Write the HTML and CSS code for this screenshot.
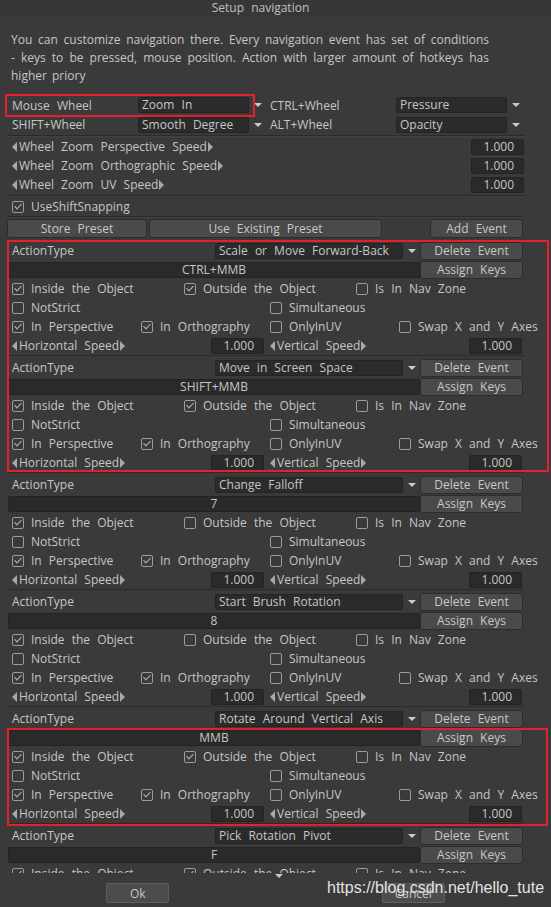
FILE: index.html
```html
<!DOCTYPE html>
<html>
<head>
<meta charset="utf-8">
<title>Setup navigation</title>
<link rel="stylesheet" href="styles.css">
</head>
<body>
<div class="titlebar">Setup navigation</div>
<div class="viewport">
  <p class="intro">You can customize navigation there. Every navigation event has set of conditions - keys to be pressed, mouse position. Action with larger amount of hotkeys has higher priory</p>

  <div class="wheel">
    <div class="wcell"><span class="wlbl">Mouse Wheel</span><span class="combo">Zoom In</span><span class="drop"><i class="tri-down"></i></span></div>
    <div class="wcell"><span class="wlbl">CTRL+Wheel</span><span class="combo">Pressure</span><span class="drop"><i class="tri-down"></i></span></div>
    <div class="wcell"><span class="wlbl">SHIFT+Wheel</span><span class="combo">Smooth Degree</span><span class="drop"><i class="tri-down"></i></span></div>
    <div class="wcell"><span class="wlbl">ALT+Wheel</span><span class="combo">Opacity</span><span class="drop"><i class="tri-down"></i></span></div>
  </div>
  <div class="sep sep-a"></div>
  <div class="speeds">
    <div class="srow"><span class="arrlbl"><i class="tri-l"></i>Wheel Zoom Perspective Speed<i class="tri-r"></i></span><span class="num">1.000</span></div>
    <div class="srow"><span class="arrlbl"><i class="tri-l"></i>Wheel Zoom Orthographic Speed<i class="tri-r"></i></span><span class="num">1.000</span></div>
    <div class="srow"><span class="arrlbl"><i class="tri-l"></i>Wheel Zoom UV Speed<i class="tri-r"></i></span><span class="num">1.000</span></div>
  </div>
  <div class="sep sep-b"></div>
  <div class="row snap"><span class="chk"><span class="cb on"></span>UseShiftSnapping</span></div>
  <div class="sep"></div>
  <div class="toolbar">
    <div class="btn b-store">Store Preset</div>
    <div class="btn b-use">Use Existing Preset</div>
    <div class="btn b-add">Add Event</div>
  </div>

  <div class="events">
    <section class="event">
      <div class="row"><span class="alabel">ActionType</span><span class="combo wide">Scale or Move Forward-Back</span><span class="drop"><i class="tri-down"></i></span><div class="btn ebtn">Delete Event</div></div>
      <div class="row"><span class="keys">CTRL+MMB</span><div class="btn ebtn">Assign Keys</div></div>
      <div class="row g3"><span class="chk"><span class="cb on"></span>Inside the Object</span><span class="chk"><span class="cb on"></span>Outside the Object</span><span class="chk"><span class="cb"></span>Is In Nav Zone</span></div>
      <div class="row g2"><span class="chk"><span class="cb"></span>NotStrict</span><span class="chk"><span class="cb"></span>Simultaneous</span></div>
      <div class="row g4"><span class="chk"><span class="cb on"></span>In Perspective</span><span class="chk"><span class="cb on"></span>In Orthography</span><span class="chk"><span class="cb"></span>OnlyInUV</span><span class="chk"><span class="cb"></span>Swap X and Y Axes</span></div>
      <div class="row g2"><div class="spd"><span class="arrlbl"><i class="tri-l"></i>Horizontal Speed<i class="tri-r"></i></span><span class="num">1.000</span></div><div class="spd"><span class="arrlbl"><i class="tri-l"></i>Vertical Speed<i class="tri-r"></i></span><span class="num">1.000</span></div></div>
    </section>

    <section class="event">
      <div class="row"><span class="alabel">ActionType</span><span class="combo wide">Move in Screen Space</span><span class="drop"><i class="tri-down"></i></span><div class="btn ebtn">Delete Event</div></div>
      <div class="row"><span class="keys">SHIFT+MMB</span><div class="btn ebtn">Assign Keys</div></div>
      <div class="row g3"><span class="chk"><span class="cb on"></span>Inside the Object</span><span class="chk"><span class="cb on"></span>Outside the Object</span><span class="chk"><span class="cb"></span>Is In Nav Zone</span></div>
      <div class="row g2"><span class="chk"><span class="cb"></span>NotStrict</span><span class="chk"><span class="cb"></span>Simultaneous</span></div>
      <div class="row g4"><span class="chk"><span class="cb on"></span>In Perspective</span><span class="chk"><span class="cb on"></span>In Orthography</span><span class="chk"><span class="cb"></span>OnlyInUV</span><span class="chk"><span class="cb"></span>Swap X and Y Axes</span></div>
      <div class="row g2"><div class="spd"><span class="arrlbl"><i class="tri-l"></i>Horizontal Speed<i class="tri-r"></i></span><span class="num">1.000</span></div><div class="spd"><span class="arrlbl"><i class="tri-l"></i>Vertical Speed<i class="tri-r"></i></span><span class="num">1.000</span></div></div>
    </section>

    <section class="event">
      <div class="row"><span class="alabel">ActionType</span><span class="combo wide">Change Falloff</span><span class="drop"><i class="tri-down"></i></span><div class="btn ebtn">Delete Event</div></div>
      <div class="row"><span class="keys">7</span><div class="btn ebtn">Assign Keys</div></div>
      <div class="row g3"><span class="chk"><span class="cb on"></span>Inside the Object</span><span class="chk"><span class="cb"></span>Outside the Object</span><span class="chk"><span class="cb"></span>Is In Nav Zone</span></div>
      <div class="row g2"><span class="chk"><span class="cb"></span>NotStrict</span><span class="chk"><span class="cb"></span>Simultaneous</span></div>
      <div class="row g4"><span class="chk"><span class="cb on"></span>In Perspective</span><span class="chk"><span class="cb on"></span>In Orthography</span><span class="chk"><span class="cb"></span>OnlyInUV</span><span class="chk"><span class="cb"></span>Swap X and Y Axes</span></div>
      <div class="row g2"><div class="spd"><span class="arrlbl"><i class="tri-l"></i>Horizontal Speed<i class="tri-r"></i></span><span class="num">1.000</span></div><div class="spd"><span class="arrlbl"><i class="tri-l"></i>Vertical Speed<i class="tri-r"></i></span><span class="num">1.000</span></div></div>
    </section>

    <section class="event">
      <div class="row"><span class="alabel">ActionType</span><span class="combo wide">Start Brush Rotation</span><span class="drop"><i class="tri-down"></i></span><div class="btn ebtn">Delete Event</div></div>
      <div class="row"><span class="keys">8</span><div class="btn ebtn">Assign Keys</div></div>
      <div class="row g3"><span class="chk"><span class="cb on"></span>Inside the Object</span><span class="chk"><span class="cb"></span>Outside the Object</span><span class="chk"><span class="cb"></span>Is In Nav Zone</span></div>
      <div class="row g2"><span class="chk"><span class="cb"></span>NotStrict</span><span class="chk"><span class="cb"></span>Simultaneous</span></div>
      <div class="row g4"><span class="chk"><span class="cb on"></span>In Perspective</span><span class="chk"><span class="cb on"></span>In Orthography</span><span class="chk"><span class="cb"></span>OnlyInUV</span><span class="chk"><span class="cb"></span>Swap X and Y Axes</span></div>
      <div class="row g2"><div class="spd"><span class="arrlbl"><i class="tri-l"></i>Horizontal Speed<i class="tri-r"></i></span><span class="num">1.000</span></div><div class="spd"><span class="arrlbl"><i class="tri-l"></i>Vertical Speed<i class="tri-r"></i></span><span class="num">1.000</span></div></div>
    </section>

    <section class="event">
      <div class="row"><span class="alabel">ActionType</span><span class="combo wide">Rotate Around Vertical Axis</span><span class="drop"><i class="tri-down"></i></span><div class="btn ebtn">Delete Event</div></div>
      <div class="row"><span class="keys">MMB</span><div class="btn ebtn">Assign Keys</div></div>
      <div class="row g3"><span class="chk"><span class="cb on"></span>Inside the Object</span><span class="chk"><span class="cb on"></span>Outside the Object</span><span class="chk"><span class="cb"></span>Is In Nav Zone</span></div>
      <div class="row g2"><span class="chk"><span class="cb"></span>NotStrict</span><span class="chk"><span class="cb"></span>Simultaneous</span></div>
      <div class="row g4"><span class="chk"><span class="cb on"></span>In Perspective</span><span class="chk"><span class="cb on"></span>In Orthography</span><span class="chk"><span class="cb"></span>OnlyInUV</span><span class="chk"><span class="cb"></span>Swap X and Y Axes</span></div>
      <div class="row g2"><div class="spd"><span class="arrlbl"><i class="tri-l"></i>Horizontal Speed<i class="tri-r"></i></span><span class="num">1.000</span></div><div class="spd"><span class="arrlbl"><i class="tri-l"></i>Vertical Speed<i class="tri-r"></i></span><span class="num">1.000</span></div></div>
    </section>

    <section class="event">
      <div class="row"><span class="alabel">ActionType</span><span class="combo wide">Pick Rotation Pivot</span><span class="drop"><i class="tri-down"></i></span><div class="btn ebtn">Delete Event</div></div>
      <div class="row"><span class="keys">F</span><div class="btn ebtn">Assign Keys</div></div>
      <div class="row g3"><span class="chk"><span class="cb on"></span>Inside the Object</span><span class="chk"><span class="cb on"></span>Outside the Object</span><span class="chk"><span class="cb"></span>Is In Nav Zone</span></div>
      <div class="row g2"><span class="chk"><span class="cb"></span>NotStrict</span><span class="chk"><span class="cb"></span>Simultaneous</span></div>
    </section>
  </div>
</div>

<div class="footer">
  <i class="scroll-tri"></i>
  <div class="fbtns">
    <div class="btn fbtn">Ok</div>
    <div class="btn fbtn">Cancel</div>
  </div>
</div>

<div class="mark mark-wheel"></div>
<div class="mark mark-events"></div>
<div class="mark mark-mmb"></div>
<div class="watermark">https://blog.csdn.net/hello_tute</div>
</body>
</html>
```

FILE: styles.css
```css
* {
  box-sizing: border-box;
  margin: 0;
  padding: 0;
}

html, body {
  width: 551px;
  height: 907px;
  overflow: hidden;
}

body {
  position: relative;
  background: #3a3a3a;
  color: #c6c6c6;
  font-family: "Open Sans", "DejaVu Sans", sans-serif;
  font-size: 12px;
  word-spacing: 4px;
  white-space: nowrap;
}

.titlebar {
  height: 16px;
  line-height: 15px;
  text-align: center;
  padding-right: 30px;
  color: #c0c0c0;
  background: #373737;
}

.viewport {
  height: 857px;
  overflow: hidden;
  padding-left: 8px;
}

.intro {
  width: 478px;
  margin: 15px 0 0 3px;
  line-height: 18px;
  text-align: justify;
  white-space: normal;
  word-spacing: 2px;
}

/* wheel bindings */
.wheel {
  margin-top: 10px;
  display: grid;
  grid-template-columns: 258px 258px;
  grid-template-rows: 20px 19px;
}

.wcell {
  display: flex;
  align-items: center;
}

.wlbl {
  width: 130px;
  padding-left: 4px;
}

.combo {
  height: 16px;
  line-height: 14px;
  background: #2b2b2b;
  border: 1px solid #242424;
  border-radius: 2px;
  padding-left: 3px;
  overflow: hidden;
}

.wcell .combo {
  width: 111px;
}

.drop {
  width: 17px;
  height: 16px;
  display: flex;
  justify-content: center;
  align-items: center;
  flex: none;
}

.tri-down {
  display: block;
  width: 0;
  height: 0;
  border-left: 4px solid transparent;
  border-right: 4px solid transparent;
  border-top: 4px solid #cacaca;
}

.sep {
  width: 516px;
  height: 1px;
  background: #2b2b2b;
  box-shadow: 0 1px 0 #414141;
}

.sep-a {
  margin: 1px 0;
}

.sep-b {
  margin: 1px 0;
}

/* speeds */
.srow {
  width: 516px;
  height: 19px;
  display: flex;
  align-items: center;
}

.arrlbl {
  display: inline-flex;
  align-items: center;
  padding-left: 4px;
}

.tri-l {
  display: block;
  width: 0;
  height: 0;
  border-top: 5px solid transparent;
  border-bottom: 5px solid transparent;
  border-right: 5px solid #a8a8a8;
  margin-right: 2px;
}

.tri-r {
  display: block;
  width: 0;
  height: 0;
  border-top: 5px solid transparent;
  border-bottom: 5px solid transparent;
  border-left: 5px solid #a8a8a8;
  margin-left: 1px;
}

.num {
  margin-left: auto;
  width: 53px;
  height: 16px;
  line-height: 14px;
  background: #2a2a2a;
  border: 1px solid #232323;
  border-radius: 2px;
  text-align: right;
  padding-right: 9px;
  word-spacing: 0;
  flex: none;
}

/* rows & checkboxes */
.row {
  width: 516px;
  height: 19px;
  display: flex;
  align-items: center;
}

.snap {
  margin-top: 1px;
}

.chk {
  display: flex;
  align-items: center;
}

.cb {
  position: relative;
  display: block;
  flex: none;
  width: 12px;
  height: 12px;
  margin: 0 7px 0 4px;
  border: 1.5px solid #9c9c9c;
  border-radius: 2px;
}

.cb.on::after {
  content: "";
  position: absolute;
  left: 3px;
  top: 0.5px;
  width: 3px;
  height: 6px;
  border: solid #b4b4b4;
  border-width: 0 1.5px 1.5px 0;
  transform: rotate(45deg);
}

.g2 {
  display: grid;
  grid-template-columns: repeat(2, 258px);
}

.g3 {
  display: grid;
  grid-template-columns: repeat(3, 172px);
}

.g4 {
  display: grid;
  grid-template-columns: repeat(4, 129px);
}

/* buttons */
.btn {
  display: flex;
  align-items: center;
  justify-content: center;
  flex: none;
  background: #4a4a4a;
  border: 1px solid #2c2c2c;
  border-radius: 3px;
  color: #c8c8c8;
}

.toolbar {
  display: flex;
  height: 19px;
  margin-top: 2px;
}

.b-store {
  width: 140px;
  margin-left: -1px;
}

.b-use {
  width: 233px;
  margin-left: 2px;
}

.b-add {
  width: 93px;
  margin-left: 48px;
}

/* events */
.events {
  margin-top: 3px;
}

.event {
  width: 516px;
  border-bottom: 1px solid #2b2b2b;
  margin-bottom: 2px;
}

.alabel {
  width: 207px;
  padding-left: 4px;
}

.combo.wide {
  width: 188px;
}

.ebtn {
  width: 103px;
  height: 18px;
}

.keys {
  width: 412px;
  height: 16px;
  line-height: 14px;
  text-align: center;
  background: #2a2a2a;
  border: 1px solid #232323;
  border-radius: 2px;
}

.spd {
  display: flex;
  align-items: center;
  padding-right: 2px;
}

/* footer */
.footer {
  height: 34px;
}

.scroll-tri {
  display: block;
  width: 0;
  height: 0;
  margin: 1px 0 0 275px;
  border-left: 4px solid transparent;
  border-right: 4px solid transparent;
  border-top: 4px solid #c9c9c9;
}

.fbtns {
  display: grid;
  grid-template-columns: 1fr 1fr;
  margin-top: 5px;
}

.fbtn {
  justify-self: center;
  width: 63px;
  height: 20px;
  background: #4c4c4c;
  border: 1px solid #5f5f5f;
  border-radius: 2px;
}

/* annotation overlays */
.mark {
  position: absolute;
  border: 2px solid #e4202a;
}

.mark-wheel {
  left: 5px;
  top: 94px;
  width: 250px;
  height: 23px;
}

.mark-events {
  left: 7px;
  top: 240px;
  width: 542px;
  height: 232px;
}

.mark-mmb {
  left: 7px;
  top: 728px;
  width: 541px;
  height: 98px;
}

.watermark {
  position: absolute;
  left: 327px;
  top: 879px;
  font-family: "Liberation Sans", Arial, sans-serif;
  font-size: 16px;
  line-height: 18px;
  word-spacing: 0;
  color: #e2e2e2;
}
```
